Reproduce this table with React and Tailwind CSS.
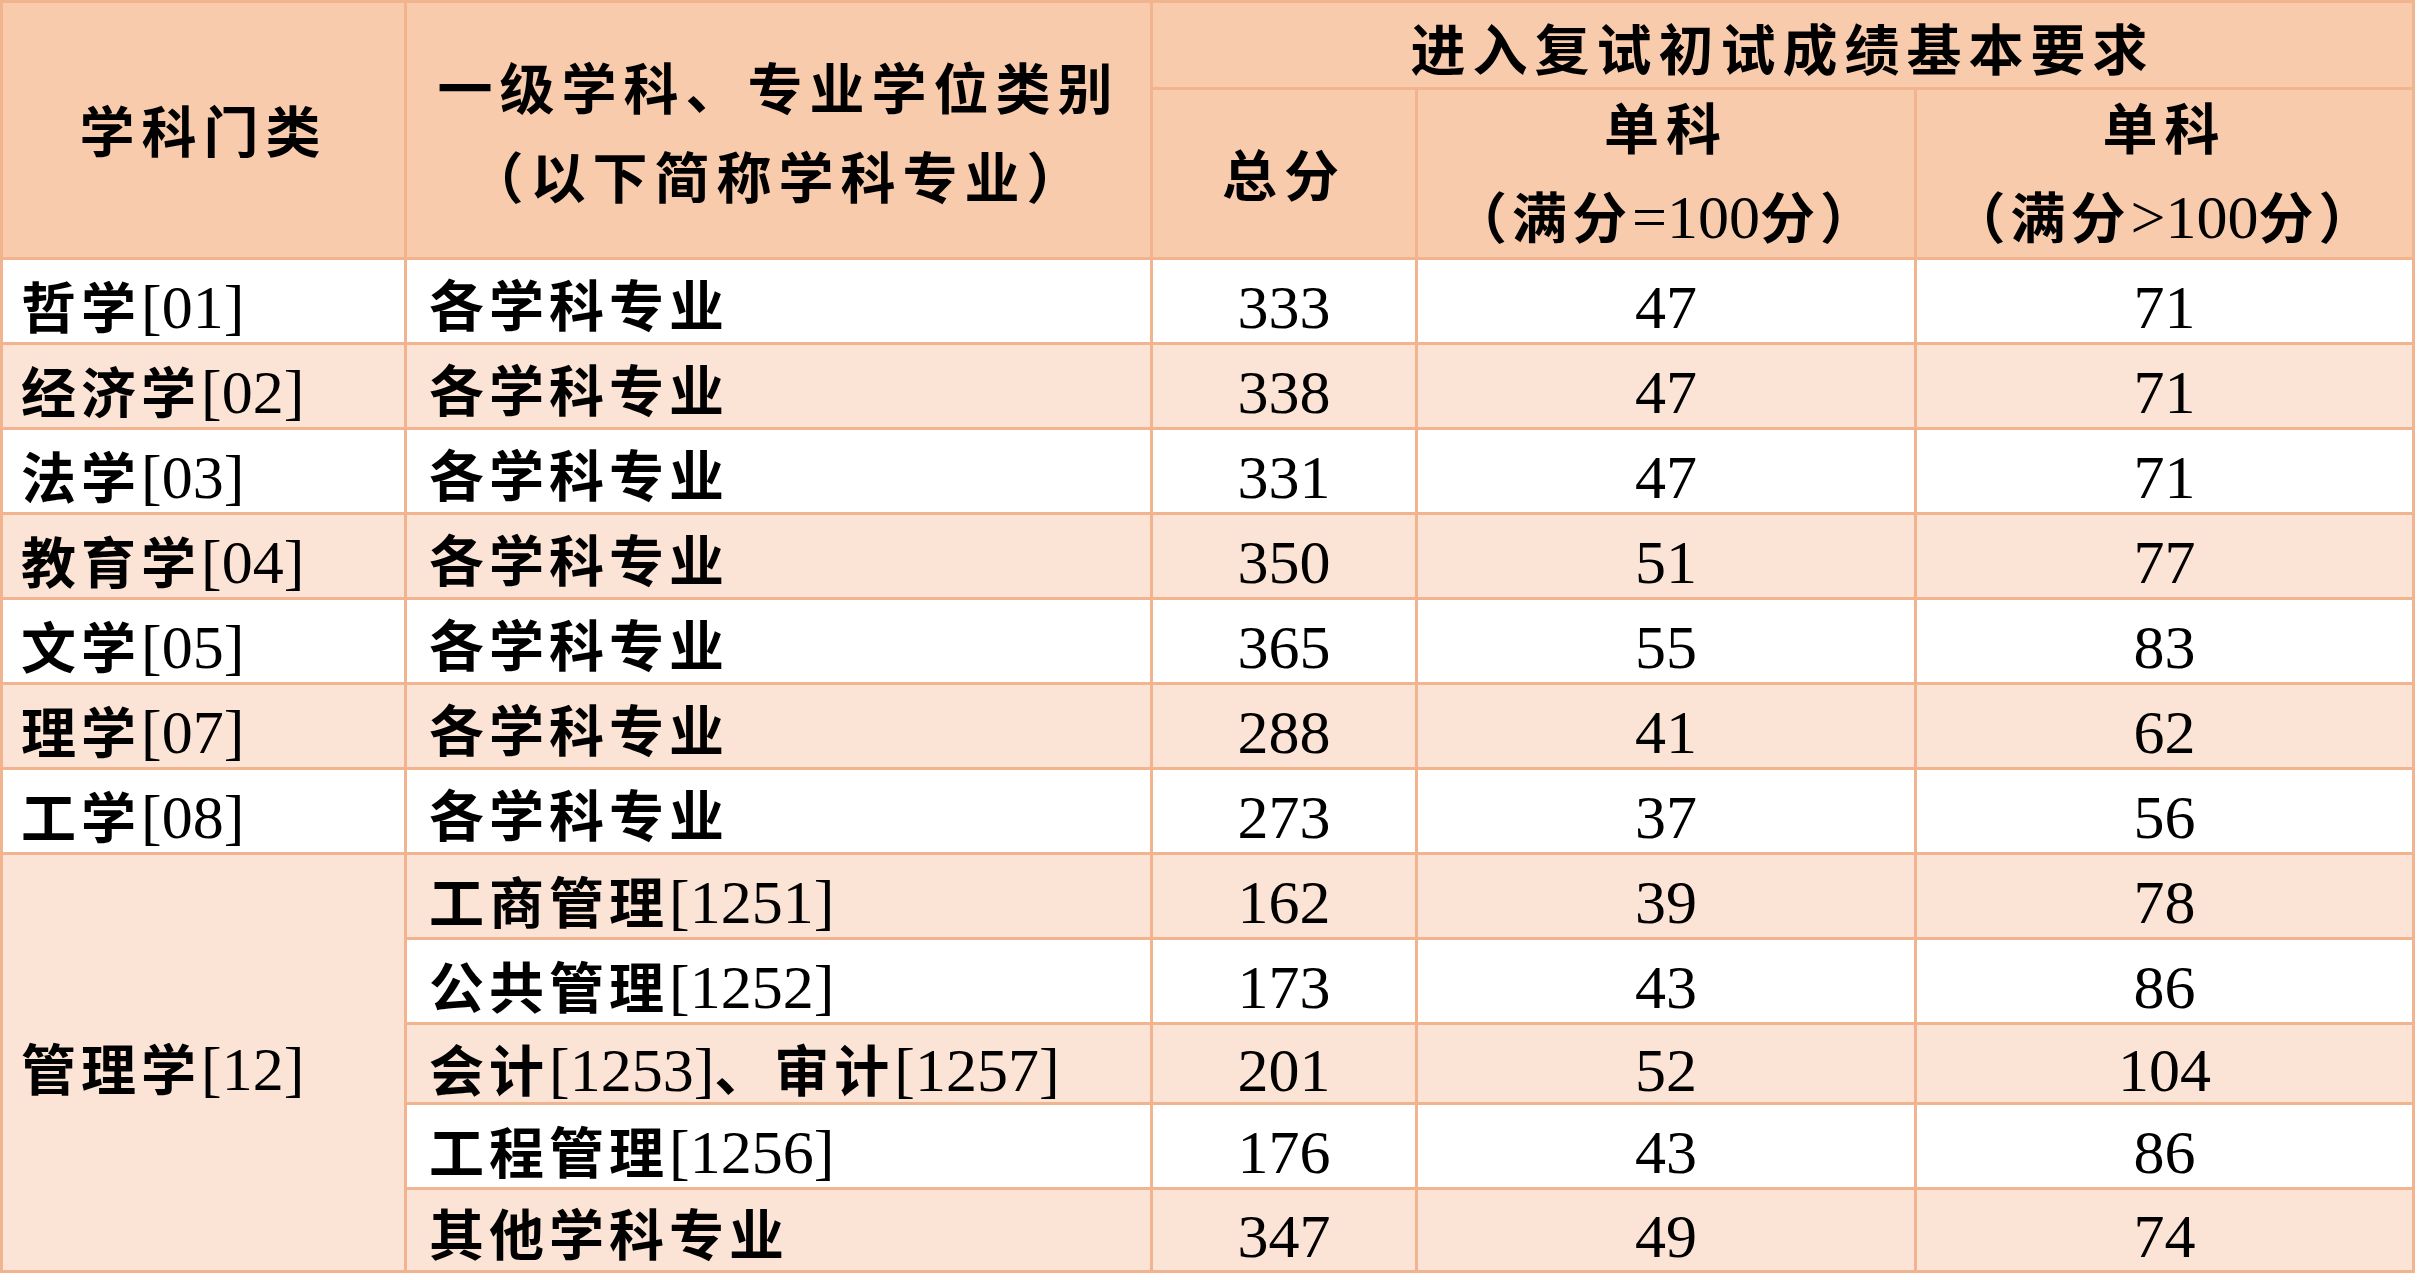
import React from "react";

const CJK = /([\u3000-\u303f\u4e00-\u9fff\uff00-\uffef]+)/;

function T({ text, wide }) {
  const parts = text.split(CJK).filter((p) => p.length > 0);
  return (
    <>
      {parts.map((p, i) =>
        CJK.test(p) ? (
          <span
            key={i}
            className={
              wide
                ? "font-bold tracking-[7px] text-[55px]"
                : "font-bold tracking-[5px] text-[55px]"
            }
          >
            {p}
          </span>
        ) : (
          <span key={i} className="text-[62px] font-normal">
            {p}
          </span>
        )
      )}
    </>
  );
}

const rows = [
  ["哲学[01]", "各学科专业", "333", "47", "71"],
  ["经济学[02]", "各学科专业", "338", "47", "71"],
  ["法学[03]", "各学科专业", "331", "47", "71"],
  ["教育学[04]", "各学科专业", "350", "51", "77"],
  ["文学[05]", "各学科专业", "365", "55", "83"],
  ["理学[07]", "各学科专业", "288", "41", "62"],
  ["工学[08]", "各学科专业", "273", "37", "56"],
];

const mgmt = [
  ["工商管理[1251]", "162", "39", "78", "h-[85px]"],
  ["公共管理[1252]", "173", "43", "86", "h-[85px]"],
  ["会计[1253]、审计[1257]", "201", "52", "104", "h-[80px]"],
  ["工程管理[1256]", "176", "43", "86", "h-[85px]"],
  ["其他学科专业", "347", "49", "74", "h-[83px]"],
];

const cell = "border-[3px] border-[#f2b48e] align-middle p-0";

export default function App() {
  return (
    <div className="w-[2419px] h-[1280px] bg-white overflow-hidden text-black leading-none" style={{ fontFamily: '"Liberation Serif", "Noto Sans CJK SC", serif' }}>
      <table className="table-fixed border-collapse w-[2412px]">
        <colgroup>
          <col className="w-[404px]" />
          <col className="w-[746px]" />
          <col className="w-[265px]" />
          <col className="w-[499px]" />
          <col className="w-[498px]" />
        </colgroup>
        <thead>
          <tr className="h-[87px] bg-[#f8cbad]">
            <th rowSpan={2} className={cell + " text-center"}>
              <div className="pt-[6px] tracking-[2px]"><T text="学科门类" wide /></div>
            </th>
            <th rowSpan={2} className={cell + " text-center"}>
              <div className="flex flex-col items-center gap-[34px] pt-[10px]">
                <div><T text="一级学科、专业学位类别" wide /></div>
                <div><T text="（以下简称学科专业）" wide /></div>
              </div>
            </th>
            <th colSpan={3} className={cell + " text-center"}>
              <div className="pt-[12px]"><T text="进入复试初试成绩基本要求" wide /></div>
            </th>
          </tr>
          <tr className="h-[170px] bg-[#f8cbad]">
            <th className={cell + " text-center"}>
              <div className="pt-[8px]"><T text="总分" wide /></div>
            </th>
            <th className={cell + " text-center"}>
              <div className="flex flex-col items-center gap-[28px] pt-[4px]">
                <div><T text="单科" wide /></div>
                <div><T text="（满分=100分）" /></div>
              </div>
            </th>
            <th className={cell + " text-center"}>
              <div className="flex flex-col items-center gap-[28px] pt-[4px]">
                <div><T text="单科" wide /></div>
                <div><T text="（满分>100分）" /></div>
              </div>
            </th>
          </tr>
        </thead>
        <tbody>
          {rows.map((r, i) => (
            <tr key={i} className={i % 2 === 0 ? "h-[85px] bg-white" : "h-[85px] bg-[#fbe4d5]"}>
              <td className={cell + " text-left pl-[18px] pt-[12px]"}>
                <T text={r[0]} />
              </td>
              <td className={cell + " text-left pl-[22px] pt-[12px]"}>
                <T text={r[1]} />
              </td>
              <td className={cell + " text-center pt-[12px]"}>
                <T text={r[2]} />
              </td>
              <td className={cell + " text-center pt-[12px]"}>
                <T text={r[3]} />
              </td>
              <td className={cell + " text-center pt-[12px]"}>
                <T text={r[4]} />
              </td>
            </tr>
          ))}
          {mgmt.map((r, i) => (
            <tr key={"m" + i} className={(i % 2 === 0 ? "bg-[#fbe4d5] " : "bg-white ") + r[4]}>
              {i === 0 && (
                <td rowSpan={5} className={cell + " bg-[#fbe4d5] text-left pl-[18px] pt-[12px]"}>
                  <T text="管理学[12]" />
                </td>
              )}
              <td className={cell + " text-left pl-[22px] pt-[12px]"}>
                <T text={r[0]} />
              </td>
              <td className={cell + " text-center pt-[12px]"}>
                <T text={r[1]} />
              </td>
              <td className={cell + " text-center pt-[12px]"}>
                <T text={r[2]} />
              </td>
              <td className={cell + " text-center pt-[12px]"}>
                <T text={r[3]} />
              </td>
            </tr>
          ))}
        </tbody>
      </table>
    </div>
  );
}
